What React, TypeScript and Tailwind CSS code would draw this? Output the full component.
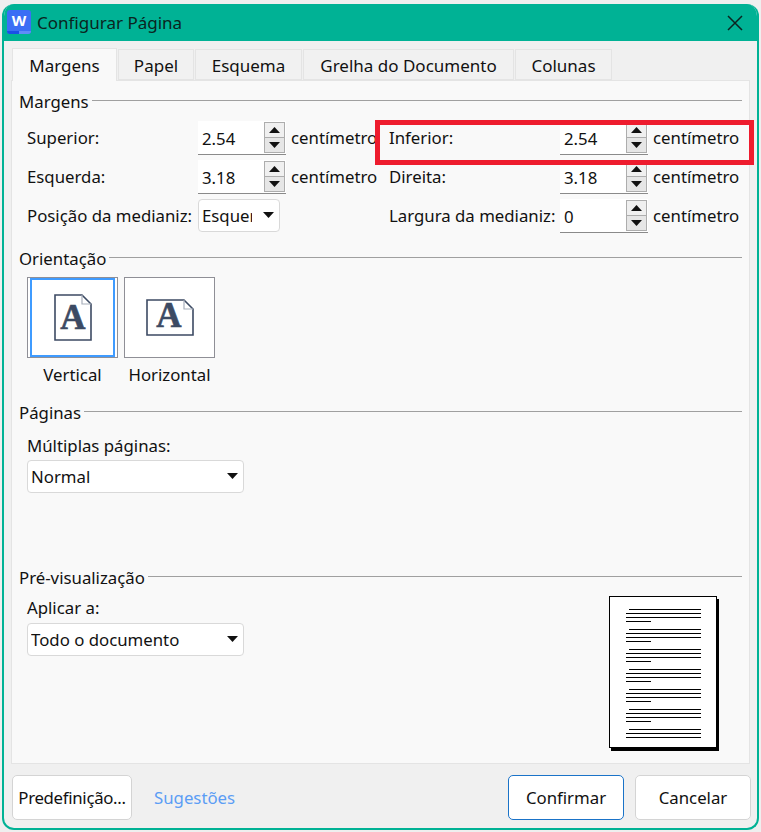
import { ReactNode } from "react";

const Section = ({ title, children }: { title: string; children: ReactNode }) => (
    <div>
        <div className="flex items-center h-[22px]">
            <span className="leading-[22px]">{title}</span>
            <div className="flex-1 h-px bg-[#a0a0a0] ml-[3px] -mt-[3px]" />
        </div>
        {children}
    </div>
);

const Triangle = ({ up }: { up?: boolean }) => (
    <svg width="11" height="6" viewBox="0 0 11 6">
        <path d={up ? "M5.5 0 L11 6 L0 6 Z" : "M0 0 L11 0 L5.5 6 Z"} fill="#111" />
    </svg>
);

const Spin = ({ value }: { value: string }) => (
    <div className="w-[88px] h-[34px] flex bg-white border-b border-b-[#8a8a8a] shrink-0">
        <span className="flex-1 pl-[4px] leading-[36px]">{value}</span>
        <div className="w-[21px] mr-[1px] my-[1px] flex flex-col border border-[#adadad]">
            <div className="flex-1 flex items-center justify-center bg-[#f0f0f0] border-b border-[#adadad]">
                <Triangle up />
            </div>
            <div className="flex-1 flex items-center justify-center bg-[#e6e6e6]">
                <Triangle />
            </div>
        </div>
    </div>
);

const Select = ({ value, className, clip }: { value: string; className: string; clip?: boolean }) => (
    <div className={`h-[33px] bg-white border border-[#d9d9d9] rounded-[4px] flex items-center pl-[3px] pr-[5px] ${className}`}>
        <span className={`flex-1 overflow-hidden whitespace-nowrap leading-[33px] ${clip ? "mr-[11px]" : ""}`}>{value}</span>
        <svg width="11" height="6" viewBox="0 0 11 6" className="shrink-0 -mt-[2px]">
            <path d="M0 0 L11 0 L5.5 6 Z" fill="#111" />
        </svg>
    </div>
);

const Unit = () => (
    <span className="w-[86px] ml-[5px] overflow-hidden whitespace-nowrap -mt-[1px]">centímetros</span>
);

const Field = ({ label, value }: { label: string; value: string }) => (
    <div className="flex items-center">
        <span className="w-[171px] shrink-0 whitespace-nowrap -mt-[1px]">{label}</span>
        <Spin value={value} />
        <Unit />
    </div>
);

const Orientation = ({ label, active, wide }: { label: string; active?: boolean; wide?: boolean }) => (
    <div className="flex flex-col items-center">
        <div className="bg-white border border-[#8f8f96] flex items-center justify-center w-[91px] h-[81px]">
            <div className={`w-full h-full flex items-center justify-center ${active ? "border-2 border-[#3f9bff] m-[2px]" : ""}`}>
                {wide ? (
                    <svg width="48" height="37" viewBox="0 0 48 37">
                        <path d="M1 1 H38 L47 10 V36 H1 Z" fill="none" stroke="#3c4a63" strokeWidth="1.6" />
                        <path d="M38 1 V10 H47" fill="none" stroke="#a8afbb" strokeWidth="1.2" />
                        <text x="23" y="28" textAnchor="middle" fill="#3c4a63" stroke="#3c4a63" strokeWidth="0.6" fontFamily="Liberation Serif" fontWeight="700" fontSize="35">A</text>
                    </svg>
                ) : (
                    <svg width="38" height="48" viewBox="0 0 38 48">
                        <path d="M1 1 H28 L37 10 V46 H1 Z" fill="none" stroke="#3c4a63" strokeWidth="1.6" />
                        <path d="M28 1 V10 H37" fill="none" stroke="#a8afbb" strokeWidth="1.2" />
                        <text x="19" y="35" textAnchor="middle" fill="#3c4a63" stroke="#3c4a63" strokeWidth="0.6" fontFamily="Liberation Serif" fontWeight="700" fontSize="35">A</text>
                    </svg>
                )}
            </div>
        </div>
        <span className="mt-[4px] leading-[25px] whitespace-nowrap">{label}</span>
    </div>
);

const Line = ({ className }: { className?: string }) => <div className={`h-px bg-black ${className ?? ""}`} />;

const PreviewPage = () => (
    <div className="w-[108px] h-[152px] bg-white border border-black shadow-[2px_3px_0_#000] pt-[12px] pl-[16px] pr-[15px] flex flex-col gap-[7px]">
        {[0, 1, 2, 3, 4, 5, 6].map((i) => (
            <div key={i} className="flex flex-col gap-[3px]">
                <Line className="ml-[3px]" />
                <Line />
                <Line />
                {i < 6 && <Line className="w-[25px]" />}
            </div>
        ))}
    </div>
);

const Tab = ({ label, active, className }: { label: string; active?: boolean; className: string }) => (
    <div className={`flex items-center justify-center shrink-0 pt-[2px] text-[17px] border border-[#e4e4e4] ${active ? "h-[33px] bg-[#f9f9f9] border-b-0 relative -mb-px z-10" : "h-[31px] bg-[#f1f1f1] ml-px"} ${className}`}>
        {label}
    </div>
);

const Button = ({ label, className }: { label: string; className: string }) => (
    <div className={`h-[45px] pt-[1px] bg-white rounded-[5px] border flex items-center justify-center shrink-0 ${className}`}>
        {label}
    </div>
);

export default function App() {
    return (
        <div className="w-[761px] h-[832px] bg-[#efefef] pt-[4px] px-[2px] pb-[2px] text-[16.8px] text-[#111] relative overflow-hidden" style={{ fontFamily: "'Noto Sans', sans-serif" }}>
            <div className="w-full h-full border-2 border-t-0 border-[#00b295] rounded-[12px] bg-[#f0f0f0] flex flex-col overflow-hidden">
                {/* title bar */}
                <div className="h-[37px] bg-[#00b295] flex items-center shrink-0 -mx-px">
                    <div className="w-[24px] h-[24px] ml-[4px] -mt-[2px] rounded-[3px] overflow-hidden bg-[#3b6ef5] flex flex-col text-white font-bold shrink-0">
                        <div className="flex-1 flex items-center justify-center text-[15px] leading-none">W</div>
                        <div className="h-[3px] flex">
                            <div className="w-[12px] bg-[#1a50e6]" />
                            <div className="flex-1 bg-[#5f8cf8]" />
                        </div>
                    </div>
                    <span className="ml-[6px] text-[17px] text-[#0b2420]">Configurar Página</span>
                    <svg width="16" height="16" viewBox="0 0 16 16" className="ml-auto mr-[15px]">
                        <path d="M1 1 L15 15 M15 1 L1 15" stroke="#0b2420" strokeWidth="1.5" />
                    </svg>
                </div>

                {/* tabs */}
                <div className="flex items-end px-[8px] mt-[7px] shrink-0">
                    <Tab label="Margens" active className="w-[105px]" />
                    <Tab label="Papel" className="w-[76px]" />
                    <Tab label="Esquema" className="w-[107px]" />
                    <Tab label="Grelha do Documento" className="w-[211px]" />
                    <Tab label="Colunas" className="w-[97px]" />
                </div>

                {/* panel */}
                <div className="h-[684px] ml-[7px] mr-[7px] bg-[#f9f9f9] border border-[#e4e4e4] px-[7px] pt-[10px] shrink-0">
                    <Section title="Margens">
                        <div className="grid grid-cols-[362px_353px] pl-[8px] pt-[8px] gap-y-[5px]">
                            <Field label="Superior:" value="2.54" />
                            <Field label="Inferior:" value="2.54" />
                            <Field label="Esquerda:" value="3.18" />
                            <Field label="Direita:" value="3.18" />
                            <div className="flex items-center h-[34px]">
                                <span className="w-[171px] shrink-0 whitespace-nowrap -mt-[1px]">Posição da medianiz:</span>
                                <Select value="Esquerda" clip className="w-[82px] -mt-[1px]" />
                            </div>
                            <Field label="Largura da medianiz:" value="0" />
                        </div>
                    </Section>

                    <div className="mt-[15px]">
                        <Section title="Orientação">
                            <div className="flex gap-[6px] pl-[8px] pt-[7px]">
                                <Orientation label="Vertical" active />
                                <Orientation label="Horizontal" wide />
                            </div>
                        </Section>
                    </div>

                    <div className="mt-[15px]">
                        <Section title="Páginas">
                            <div className="pl-[8px] pt-[10px]">
                                <div className="leading-[24px]">Múltiplas páginas:</div>
                                <Select value="Normal" className="w-[217px] mt-[2px]" />
                            </div>
                        </Section>
                    </div>

                    <div className="mt-[74px]">
                        <Section title="Pré-visualização">
                            <div className="flex justify-between pl-[8px] pr-[25px]">
                                <div className="pt-[7px]">
                                    <div className="leading-[24px]">Aplicar a:</div>
                                    <Select value="Todo o documento" className="w-[217px] mt-[3px]" />
                                </div>
                                <div className="pt-[7px]">
                                    <PreviewPage />
                                </div>
                            </div>
                        </Section>
                    </div>
                </div>

                {/* footer */}
                <div className="flex items-center pl-[8px] pr-[6px] mt-[11px]">
                    <Button label="Predefinição..." className="w-[120px] border-[#d4d4d4] tracking-[-0.3px]" />
                    <span className="ml-[22px] mt-[1px] text-[#5b9df5]">Sugestões</span>
                    <Button label="Confirmar" className="w-[116px] ml-auto border-[#1a73c8]" />
                    <Button label="Cancelar" className="w-[116px] ml-[11px] border-[#d4d4d4]" />
                </div>
            </div>

            {/* annotation over the Inferior row */}
            <div className="absolute left-[375px] top-[120px] w-[379px] h-[45px] border-[5px] border-[#ee1c2e]" />
        </div>
    );
}
